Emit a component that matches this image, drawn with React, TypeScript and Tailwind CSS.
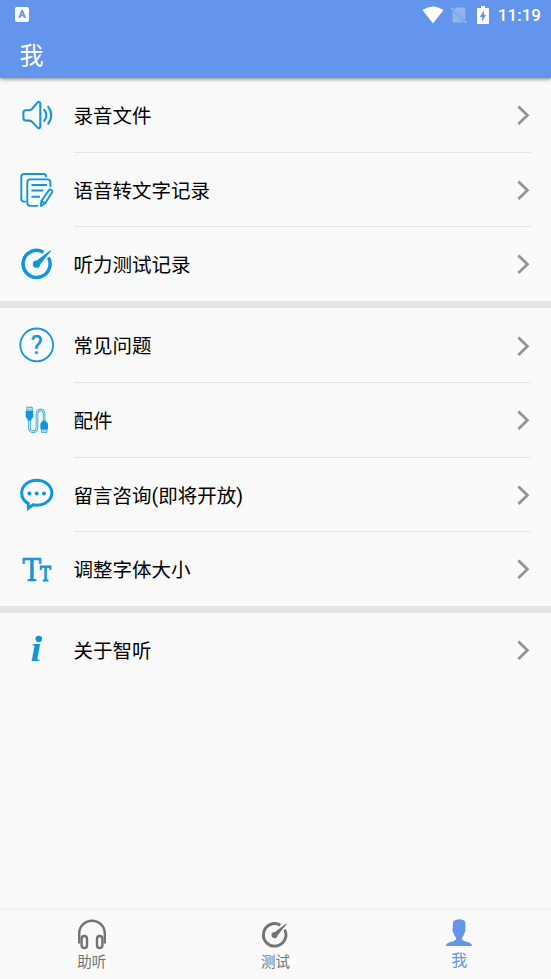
import type { ReactNode } from "react";

const iconClassName = "block h-9 w-9 shrink-0 overflow-visible text-[#1296db]";

function SpeakerIcon() {
  return (
    <svg viewBox="0 0 36 36" className={iconClassName} fill="none" stroke="currentColor" strokeWidth="2.1" strokeLinecap="round" strokeLinejoin="round">
      <path d="M4.4 15.6Q4.4 13.3 6.7 13.2L10.5 13.1Q11.9 13 12.9 12L18.4 5.6Q19.5 4.6 20.6 5.1Q21.3 5.5 21.3 6.8V29.3Q21.3 30.7 20.5 31.1Q19.5 31.5 18.4 30.4L12.9 24.6Q11.9 23.7 10.5 23.6L6.7 23.5Q4.4 23.3 4.4 21Z" />
      <path d="M25.2 12.8Q29.6 18.2 25.2 23.8M29.3 9.8Q35.3 18.2 29.3 26.7" />
    </svg>
  );
}

function NotesIcon() {
  return (
    <svg viewBox="0 0 36 36" className={iconClassName} fill="none" stroke="currentColor" strokeWidth="1.9" strokeLinecap="round" strokeLinejoin="round">
      <path d="M27 4.6V4Q27 2 24.6 2H5.2Q2.3 2 2.3 4.9V26.8Q2.3 29.6 5.2 29.6H6.4" />
      <path d="M31.4 14.3V10.4Q31.4 7.4 28.5 7.4H11.3Q8.3 7.4 8.3 10.4V31Q8.3 33.9 11.3 33.9H18.3" />
      <path d="M13.2 13H27.3M13.2 18.5H23.8M13.2 24.8H20.2" />
      <path d="M29.8 18.2Q30.7 16.9 32 17.8Q33.9 18.8 33.1 20.2L26 31.5L22 33.9L22.3 29.1ZM22.6 29.1L26 31.4" />
    </svg>
  );
}

function GaugeIcon({ className }: { className: string }) {
  return (
    <svg viewBox="0 0 36 36" className={className} fill="none" stroke="currentColor">
      <path d="M24.4 6.2A13.5 13.5 0 1 0 29.5 11.5" strokeWidth="3.5" />
      <path d="M31.4 4.2L32.1 4.9L21.2 18.4A3.7 3.7 0 1 1 17.8 14.4Z" fill="currentColor" stroke="none" />
    </svg>
  );
}

function QuestionIcon() {
  return (
    <svg viewBox="0 0 36 36" className={iconClassName}>
      <circle cx="17.7" cy="17.9" r="16.4" fill="none" stroke="currentColor" strokeWidth="1.8" />
      <text x="17.7" y="27" textAnchor="middle" fill="currentColor" stroke="currentColor" strokeWidth=".4" className="font-['Roboto',sans-serif] text-[25px] font-normal">
        ?
      </text>
    </svg>
  );
}

function CableIcon() {
  return (
    <svg viewBox="0 0 36 36" className={iconClassName} fill="none" stroke="currentColor">
      <path d="M10.4 17V25.5Q10.4 29.7 14.2 29.7Q18 29.7 18 25.5V12.5Q18 8 21.7 8Q25.1 8 25.1 12.5V20" strokeWidth="2.5" />
      <path d="M10.4 17V25.5Q10.4 29.7 14.2 29.7Q18 29.7 18 25.5V12.5Q18 8 21.7 8Q25.1 8 25.1 12.5V20" stroke="#d5ebf7" strokeWidth="1.1" />
      <path d="M6.7 9H14.3V15Q14.3 16.3 12.5 16.8V18.5H8.4V16.8Q6.7 16.3 6.7 15ZM21.4 27.2H29V21.8Q29 20.4 27.2 20V18.8H23.1V20Q21.4 20.4 21.4 21.8Z" fill="currentColor" stroke="none" />
      <path d="M7.9 5.2H13.2V9H7.9ZM22.6 27.2H27.9V30.3H22.6Z" strokeWidth="0.9" />
      <path d="M9.7 6.5V8M11.6 6.5V8M24.3 28V29.2M26.2 28V29.2" strokeWidth="0.8" />
    </svg>
  );
}

function ChatIcon() {
  return (
    <svg viewBox="0 0 36 36" className={iconClassName} fill="none" stroke="currentColor">
      <path d="M9.2 26.4C5.3 24.2 2.7 20.3 2.7 15.9C2.7 8.9 9.4 3.2 17.7 3.2S32.8 8.9 32.8 15.9S26 28.2 17.7 28.2C16.4 28.2 15.2 28.1 14 27.8L9.4 31.2Z" strokeWidth="3" />
      <g fill="currentColor" stroke="none">
        <circle cx="10.4" cy="16.4" r="2" />
        <circle cx="17.7" cy="16.4" r="2" />
        <circle cx="25" cy="16.4" r="2" />
      </g>
    </svg>
  );
}

function FontSizeIcon() {
  return (
    <svg viewBox="0 0 36 36" className={iconClassName} fill="currentColor" stroke="currentColor">
      <text x="0" y="0" transform="translate(3.5 29.6) scale(.87 1)" strokeWidth=".7" className="font-['DejaVu_Serif'] text-[32px]">
        T
      </text>
      <text x="0" y="0" transform="translate(20.9 29.6) scale(.8 1)" strokeWidth="1.1" className="font-['DejaVu_Serif'] text-[20.5px]">
        T
      </text>
    </svg>
  );
}

function InfoIcon() {
  return (
    <svg viewBox="0 0 36 36" className={iconClassName} fill="currentColor">
      <text x="11.6" y="28.5" textLength="11" lengthAdjust="spacingAndGlyphs" className="font-['Liberation_Serif',serif] text-[36px] font-bold italic">
        i
      </text>
      <circle cx="19.8" cy="7" r="3.2" />
    </svg>
  );
}

function StatusBar() {
  return (
    <div className="flex h-[29px] items-center justify-between pr-[10px] pl-[15px]">
      <div className="flex h-[15px] w-[14px] items-center justify-center rounded-[2px] bg-white font-['Roboto',sans-serif] text-[11px] leading-none font-black text-[#6495ed]">
        A
      </div>
      <div className="flex items-center">
        <svg viewBox="0 0 22 18" className="h-[18px] w-[22px]" fill="#fff">
          <path d="M.5 4Q11-3.2 21.5 4L11 17.5Z" />
        </svg>
        <svg viewBox="0 0 16 18" className="ml-[7px] h-[18px] w-4">
          <path d="M5.5 1.5H13Q14.2 1.5 14.2 2.7V14L3.4 3.5ZM1.5 5.2L12.5 16.5H2.7Q1.5 16.5 1.5 15.3Z" fill="#fff" opacity=".3" />
          <path d="M.5 2.2L15.3 17.2" stroke="#fff" strokeWidth="1.2" opacity=".4" />
        </svg>
        <svg viewBox="0 0 12 18" className="ml-[10px] h-[18px] w-3">
          <path d="M4 0H8V2H11Q12 2 12 3V17Q12 18 11 18H1Q0 18 0 17V3Q0 2 1 2H4Z" fill="#fff" />
          <path d="M6.9 4.5V8.7H9.3L5.1 15.4V11H2.7Z" fill="#6495ed" />
        </svg>
        <span className="ml-[9px] pt-px font-['Roboto',sans-serif] text-[17px] leading-none font-medium text-white">11:19</span>
      </div>
    </div>
  );
}

type MenuItem = { label: string; icon: ReactNode };

const menuGroups: MenuItem[][] = [
  [
    { label: "录音文件", icon: <SpeakerIcon /> },
    { label: "语音转文字记录", icon: <NotesIcon /> },
    { label: "听力测试记录", icon: <GaugeIcon className={iconClassName} /> },
  ],
  [
    { label: "常见问题", icon: <QuestionIcon /> },
    { label: "配件", icon: <CableIcon /> },
    { label: "留言咨询(即将开放)", icon: <ChatIcon /> },
    { label: "调整字体大小", icon: <FontSizeIcon /> },
  ],
  [{ label: "关于智听", icon: <InfoIcon /> }],
];

function MenuRow({ label, icon }: MenuItem) {
  return (
    <li className="group flex h-[74.7px] pl-[19px] last:h-[73.8px]">
      <div className="flex h-[74px] w-[54.5px] items-center">{icon}</div>
      <div className="mr-5 flex flex-1 items-center justify-between border-b border-[#e5e5e5] pr-px group-last:border-transparent">
        <span className="pt-[4px] text-[19.5px] leading-none text-black">{label}</span>
        <svg viewBox="0 0 13 20" className="mt-px h-5 w-[13px]" fill="none" stroke="#949494" strokeWidth="2.8">
          <path d="M1.4 1.6L10.4 10.3L1.4 19" />
        </svg>
      </div>
    </li>
  );
}

export default function App() {
  return (
    <div className="flex h-[979px] w-full flex-col bg-[#fafafa] font-['Roboto','Noto_Sans_CJK_SC',sans-serif]">
      <header className="z-10 h-[78px] shrink-0 bg-[#6495ed] shadow-[0_1px_4px_rgba(0,0,0,0.5)]">
        <StatusBar />
        <h1 className="pt-[15px] pl-[19.5px] text-2xl leading-6 font-normal text-white">我</h1>
      </header>

      <main className="flex-1">
        {menuGroups.map((group, index) => (
          <ul key={index} className="border-b-[7px] border-[#e5e5e5] last:border-b-0">
            {group.map((item) => (
              <MenuRow key={item.label} {...item} />
            ))}
          </ul>
        ))}
      </main>

      <nav className="grid h-[71px] shrink-0 grid-cols-3 border-t-2 border-[#f3f3f3] text-[14.5px] leading-none text-[#737373]">
        <div className="flex flex-col items-center pt-[9px]">
          <svg viewBox="0 0 30 32" className="h-8 w-[30px]" fill="none" stroke="currentColor" strokeWidth="2.4">
            <path d="M2.2 24.5V14.5A12.8 12.8 0 0 1 27.8 14.5V24.5" />
            <rect x="4.6" y="17" width="5.4" height="12" rx="2.7" />
            <rect x="20" y="17" width="5.4" height="12" rx="2.7" />
          </svg>
          <span className="mt-[5px]">助听</span>
        </div>
        <div className="flex flex-col items-center pt-[9px]">
          <GaugeIcon className="my-px h-[30px] w-[30px]" />
          <span className="mt-[5px]">测试</span>
        </div>
        <div className="flex flex-col items-center pt-[9px] text-[#6495ed]">
          <svg viewBox="0 0 26 28" className="h-7 w-[26px]" fill="currentColor">
            <path d="M7 3.8Q7.3 1.2 10 1Q12.8-.4 16.2.7Q19.5 1.4 19.4 4.8V10Q19.7 12.5 18.4 14Q17.8 17 16 18.4V20.6Q17.5 22.2 21.3 22.9Q25.8 23.7 26 27H0Q.2 23.7 4.7 22.9Q8.5 22.2 10 20.6V18.4Q8.2 17 7.6 14Q6.3 12.5 6.6 10Z" />
          </svg>
          <span className="mt-[6px] text-base leading-none">我</span>
        </div>
      </nav>
    </div>
  );
}
